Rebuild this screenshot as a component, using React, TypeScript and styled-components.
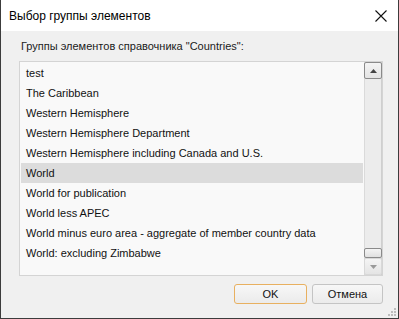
import React from "react";
import styled, { createGlobalStyle } from "styled-components";

const Global = createGlobalStyle`
  html, body { margin: 0; padding: 0; }
  body { width: 399px; height: 319px; overflow: hidden; background: #f0f0f0; }
  * { box-sizing: border-box; }
`;

const Window = styled.div`
  position: relative;
  width: 399px;
  height: 319px;
  display: flex;
  flex-direction: column;
  border: 1px solid #3c3c3c;
  border-top: none;
  background: #f0f0f0;
  font-family: "Liberation Sans", Arial, sans-serif;
  color: #000;
`;

const TitleBar = styled.div`
  height: 31px;
  background: #fff;
  display: flex;
  align-items: center;
  justify-content: space-between;
  padding: 0 8px 0 8px;
  flex-shrink: 0;
`;

const Title = styled.div`
  font-size: 12px;
  color: #000;
`;

const CloseBtn = styled.div`
  width: 14px;
  height: 14px;
  margin-right: 2px;
  display: flex;
  align-items: center;
  justify-content: center;
`;

const Body = styled.div`
  flex: 1;
  display: flex;
  flex-direction: column;
  padding: 9px 15px 0 18px;
`;

const Label = styled.div`
  font-size: 11px;
  color: #1a1a1a;
  padding-left: 2px;
  height: 12px;
  line-height: 12px;
  margin-bottom: 9px;
`;

const ListBox = styled.div`
  width: 364px;
  height: 215px;
  border: 1px solid #d4d4d4;
  background: #f9f9f9;
  display: flex;
`;

const Items = styled.div`
  flex: 1;
  padding: 1px 1px 0 1px;
  display: flex;
  flex-direction: column;
`;

const Item = styled.div<{ $selected?: boolean }>`
  height: 20px;
  line-height: 20px;
  padding-left: 5px;
  font-size: 11px;
  color: #111;
  white-space: nowrap;
  background: ${(p) => (p.$selected ? "#dcdcdc" : "transparent")};
`;

const ScrollBar = styled.div`
  width: 18px;
  display: flex;
  flex-direction: column;
  border-left: 1px solid #dadada;
  border-right: 1px solid #cfcfcf;
  background: #ececec;
`;

const ArrowBtn = styled.div<{ $bold?: boolean }>`
  height: 17px;
  border: 1px solid ${(p) => (p.$bold ? "#8a8a8a" : "#d8d8d8")};
  border-radius: 2px;
  background: linear-gradient(#f4f4f4, #e4e4e4);
  display: flex;
  align-items: center;
  justify-content: center;
  margin: 0 -1px;
`;

const Track = styled.div`
  flex: 1;
  display: flex;
  flex-direction: column;
  justify-content: flex-end;
`;

const Thumb = styled.div`
  height: 10px;
  border: 1px solid #8a8a8a;
  border-radius: 2px;
  background: linear-gradient(#f4f4f4, #e0e0e0);
  margin: 0 -1px;
`;

const Footer = styled.div`
  display: flex;
  justify-content: flex-end;
  gap: 5px;
  padding: 8px 0 0 0;
`;

const Button = styled.div<{ $default?: boolean }>`
  width: ${(p) => (p.$default ? "73px" : "71px")};
  height: 20px;
  border: 1px solid ${(p) => (p.$default ? "#e8b060" : "#c4c4c4")};
  border-radius: 3px;
  background: linear-gradient(#f7f7f7, #ebebeb);
  font-size: 11px;
  color: #111;
  display: flex;
  align-items: center;
  justify-content: center;
`;

const Grip = styled.svg`
  position: absolute;
  right: 1px;
  bottom: 1px;
`;

const items = [
  "test",
  "The Caribbean",
  "Western Hemisphere",
  "Western Hemisphere Department",
  "Western Hemisphere including Canada and U.S.",
  "World",
  "World for publication",
  "World less APEC",
  "World minus euro area - aggregate of member country data",
  "World: excluding Zimbabwe",
];

export default function App() {
  return (
    <>
      <Global />
      <Window>
        <TitleBar>
          <Title>Выбор группы элементов</Title>
          <CloseBtn>
            <svg width="12" height="12" viewBox="0 0 12 12">
              <path d="M0.5 0.5 L11.5 11.5 M11.5 0.5 L0.5 11.5" stroke="#111" strokeWidth="1.1" />
            </svg>
          </CloseBtn>
        </TitleBar>
        <Body>
          <Label>Группы элементов справочника "Countries":</Label>
          <ListBox>
            <Items>
              {items.map((t) => (
                <Item key={t} $selected={t === "World"}>
                  {t}
                </Item>
              ))}
            </Items>
            <ScrollBar>
              <ArrowBtn $bold>
                <svg width="7" height="4" viewBox="0 0 7 4">
                  <path d="M3.5 0 L7 4 L0 4 Z" fill="#444" />
                </svg>
              </ArrowBtn>
              <Track>
                <Thumb />
              </Track>
              <ArrowBtn>
                <svg width="7" height="4" viewBox="0 0 7 4">
                  <path d="M0 0 L7 0 L3.5 4 Z" fill="#999" />
                </svg>
              </ArrowBtn>
            </ScrollBar>
          </ListBox>
          <Footer>
            <Button $default>OK</Button>
            <Button>Отмена</Button>
          </Footer>
        </Body>
        <Grip width="10" height="10" viewBox="0 0 10 10">
          {[
            [8, 2],
            [8, 5],
            [5, 5],
            [8, 8],
            [5, 8],
            [2, 8],
          ].map(([x, y]) => (
            <rect key={`${x}-${y}`} x={x - 1} y={y - 1} width="2" height="2" fill="#bdbdbd" />
          ))}
        </Grip>
      </Window>
    </>
  );
}
